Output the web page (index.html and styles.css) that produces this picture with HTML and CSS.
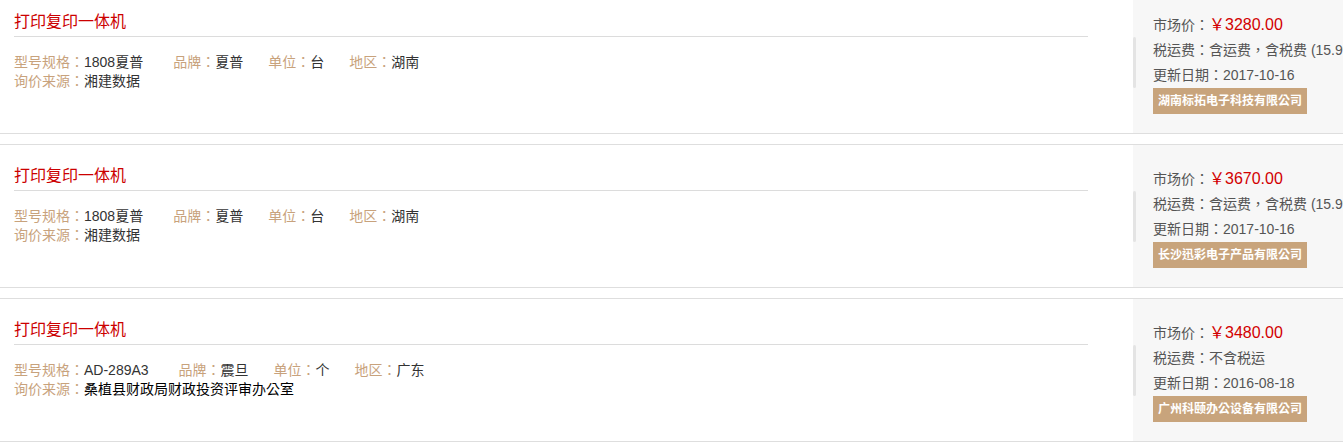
FILE: index.html
```html
<!DOCTYPE html>
<html lang="zh-CN">
<head>
<meta charset="utf-8">
<title>询价列表</title>
<link rel="stylesheet" href="styles.css">
</head>
<body>
<div class="list">
  <div class="card">
    <div class="main">
      <div class="title">打印复印一体机</div>
      <div class="specs">
        <div class="row">
          <span class="item item-first"><span class="lbl">型号规格：</span><span class="val">1808夏普</span></span>
          <span class="item"><span class="lbl">品牌：</span><span class="val">夏普</span></span>
          <span class="item"><span class="lbl">单位：</span><span class="val">台</span></span>
          <span class="item"><span class="lbl">地区：</span><span class="val">湖南</span></span>
        </div>
        <div class="row"><span class="lbl">询价来源：</span><span class="val">湘建数据</span></div>
      </div>
    </div>
    <div class="side">
      <div class="bar"></div>
      <div class="info">
        <div class="line">市场价：<span class="price">￥3280.00</span></div>
        <div class="line">税运费：含运费，含税费 (15.9%)</div>
        <div class="line">更新日期：2017-10-16</div>
        <div class="company">湖南标拓电子科技有限公司</div>
      </div>
    </div>
  </div>

  <div class="card">
    <div class="main">
      <div class="title">打印复印一体机</div>
      <div class="specs">
        <div class="row">
          <span class="item item-first"><span class="lbl">型号规格：</span><span class="val">1808夏普</span></span>
          <span class="item"><span class="lbl">品牌：</span><span class="val">夏普</span></span>
          <span class="item"><span class="lbl">单位：</span><span class="val">台</span></span>
          <span class="item"><span class="lbl">地区：</span><span class="val">湖南</span></span>
        </div>
        <div class="row"><span class="lbl">询价来源：</span><span class="val">湘建数据</span></div>
      </div>
    </div>
    <div class="side">
      <div class="bar"></div>
      <div class="info">
        <div class="line">市场价：<span class="price">￥3670.00</span></div>
        <div class="line">税运费：含运费，含税费 (15.9%)</div>
        <div class="line">更新日期：2017-10-16</div>
        <div class="company">长沙迅彩电子产品有限公司</div>
      </div>
    </div>
  </div>

  <div class="card">
    <div class="main">
      <div class="title">打印复印一体机</div>
      <div class="specs">
        <div class="row">
          <span class="item item-first"><span class="lbl">型号规格：</span><span class="val">AD-289A3</span></span>
          <span class="item"><span class="lbl">品牌：</span><span class="val">震旦</span></span>
          <span class="item"><span class="lbl">单位：</span><span class="val">个</span></span>
          <span class="item"><span class="lbl">地区：</span><span class="val">广东</span></span>
        </div>
        <div class="row"><span class="lbl">询价来源：</span><span class="val val-dark">桑植县财政局财政投资评审办公室</span></div>
      </div>
    </div>
    <div class="side">
      <div class="bar"></div>
      <div class="info">
        <div class="line">市场价：<span class="price">￥3480.00</span></div>
        <div class="line">税运费：不含税运</div>
        <div class="line">更新日期：2016-08-18</div>
        <div class="company">广州科颐办公设备有限公司</div>
      </div>
    </div>
  </div>
</div>
</body>
</html>
```

FILE: styles.css
```css
html, body {
  margin: 0;
  padding: 0;
  background: #fff;
  overflow: hidden;
}
body {
  width: 1343px;
  font-family: "Liberation Sans", "Noto Sans CJK TC", sans-serif;
  -webkit-locale: "zh-TW";
  font-size: 14px;
  color: #333;
}
.list {
  margin-top: -10px;
  display: flex;
  flex-direction: column;
  gap: 10px;
}
.card {
  display: flex;
  height: 142px;
  border-top: 1px solid #dedede;
  border-bottom: 1px solid #dedede;
  background: #fff;
}
.main {
  flex: 0 0 1133px;
  box-sizing: border-box;
  padding: 19px 45px 0 14px;
}
.title {
  font-size: 16px;
  line-height: 24px;
  color: #cc0000;
  padding-bottom: 2px;
  border-bottom: 1px solid #dcdcdc;
}
.specs {
  margin-top: 16px;
}
.row {
  display: flex;
  line-height: 19px;
  white-space: nowrap;
}
.item {
  margin-right: 25px;
}
.item-first {
  margin-right: 30px;
}
.lbl {
  color: #c8a27c;
}
.val {
  color: #333;
}
.val-dark {
  color: #000;
}
.side {
  flex: 1;
  display: flex;
  background: #f7f7f7;
  overflow: hidden;
}
.bar {
  flex: 0 0 3px;
  height: 51px;
  margin-top: 46px;
  margin-right: 17px;
  background: #e4e4e4;
  border-radius: 2px;
}
.info {
  padding-top: 21px;
  white-space: nowrap;
  color: #555;
}
.line {
  line-height: 25px;
}
.price {
  font-size: 16px;
  color: #d20000;
}
.company {
  display: inline-block;
  height: 26px;
  line-height: 26px;
  padding: 0 5px;
  background: #c8a47c;
  color: #fff;
  font-size: 12px;
  font-weight: bold;
}
```
